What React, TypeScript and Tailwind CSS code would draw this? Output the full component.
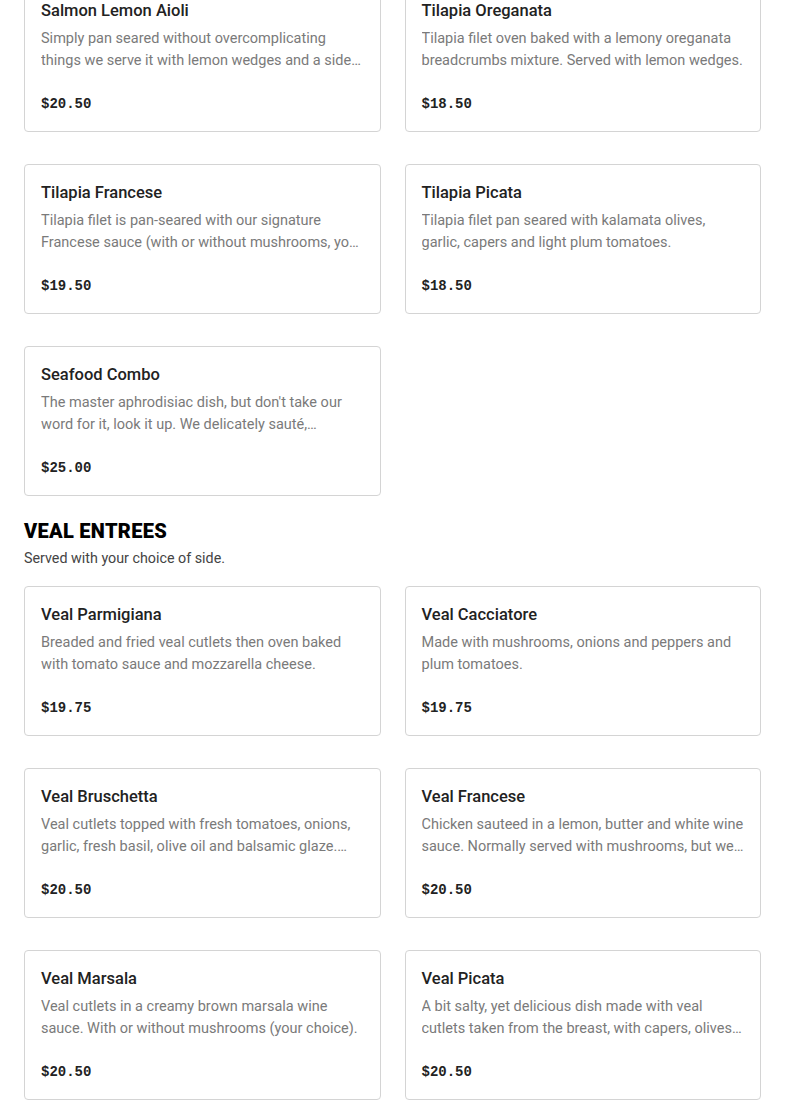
const seafood = [
  {
    name: "Salmon Lemon Aioli",
    desc: "Simply pan seared without overcomplicating things we serve it with lemon wedges and a side of our house made lemon aioli.",
    price: "$20.50",
  },
  {
    name: "Tilapia Oreganata",
    desc: "Tilapia filet oven baked with a lemony oreganata breadcrumbs mixture. Served with lemon wedges.",
    price: "$18.50",
  },
  {
    name: "Tilapia Francese",
    desc: "Tilapia filet is pan-seared with our signature Francese sauce (with or without mushrooms, your choice).",
    price: "$19.50",
  },
  {
    name: "Tilapia Picata",
    desc: "Tilapia filet pan seared with kalamata olives, garlic, capers and light plum tomatoes.",
    price: "$18.50",
  },
  {
    name: "Seafood Combo",
    desc: "The master aphrodisiac dish, but don't take our word for it, look it up. We delicately sauté, calamari, shrimp and mussels.",
    price: "$25.00",
  },
];

const veal = [
  {
    name: "Veal Parmigiana",
    desc: "Breaded and fried veal cutlets then oven baked with tomato sauce and mozzarella cheese.",
    price: "$19.75",
  },
  {
    name: "Veal Cacciatore",
    desc: "Made with mushrooms, onions and peppers and plum tomatoes.",
    price: "$19.75",
  },
  {
    name: "Veal Bruschetta",
    desc: "Veal cutlets topped with fresh tomatoes, onions, garlic, fresh basil, olive oil and balsamic glaze. Served over greens.",
    price: "$20.50",
  },
  {
    name: "Veal Francese",
    desc: "Chicken sauteed in a lemon, butter and white wine sauce. Normally served with mushrooms, but we can make it without.",
    price: "$20.50",
  },
  {
    name: "Veal Marsala",
    desc: "Veal cutlets in a creamy brown marsala wine sauce. With or without mushrooms (your choice).",
    price: "$20.50",
  },
  {
    name: "Veal Picata",
    desc: "A bit salty, yet delicious dish made with veal cutlets taken from the breast, with capers, olives and lemon.",
    price: "$20.50",
  },
];

type Item = { name: string; desc: string; price: string };

// Single menu item card
const ItemCard = ({ item }: { item: Item }) => (
  <div className="h-[150px] border border-[#d4d4d4] rounded-[4px] bg-white px-4 pt-4 pb-4 flex flex-col">
    <h3 className="text-[16.5px] leading-6 font-medium text-[#222]">{item.name}</h3>
    <p className="mt-[5px] text-[14.5px] leading-[22px] text-[#7a7a7a] line-clamp-2">{item.desc}</p>
    <p className="mt-[21px] text-[14px] leading-[22px] font-bold text-[#222] font-['Liberation_Mono',monospace]">
      {item.price}
    </p>
  </div>
);

export default function App() {
  return (
    <div className="bg-white min-h-screen px-6 font-['Roboto',sans-serif] overflow-hidden">
      {/* page is scrolled: first row starts above the top edge */}
      <div className="grid grid-cols-2 gap-x-6 gap-y-8 -mt-[18px]">
        {seafood.map((item) => (
          <ItemCard key={item.name} item={item} />
        ))}
      </div>

      <div className="mt-[20px]">
        <h2 className="text-[20px] leading-[30px] font-black tracking-[0.3px] text-black">VEAL ENTREES</h2>
        <p className="mt-[1px] text-[14.3px] leading-[22px] text-[#444]">Served with your choice of side.</p>
      </div>

      <div className="grid grid-cols-2 gap-x-6 gap-y-8 mt-[17px] pb-8">
        {veal.map((item) => (
          <ItemCard key={item.name} item={item} />
        ))}
      </div>
    </div>
  );
}
